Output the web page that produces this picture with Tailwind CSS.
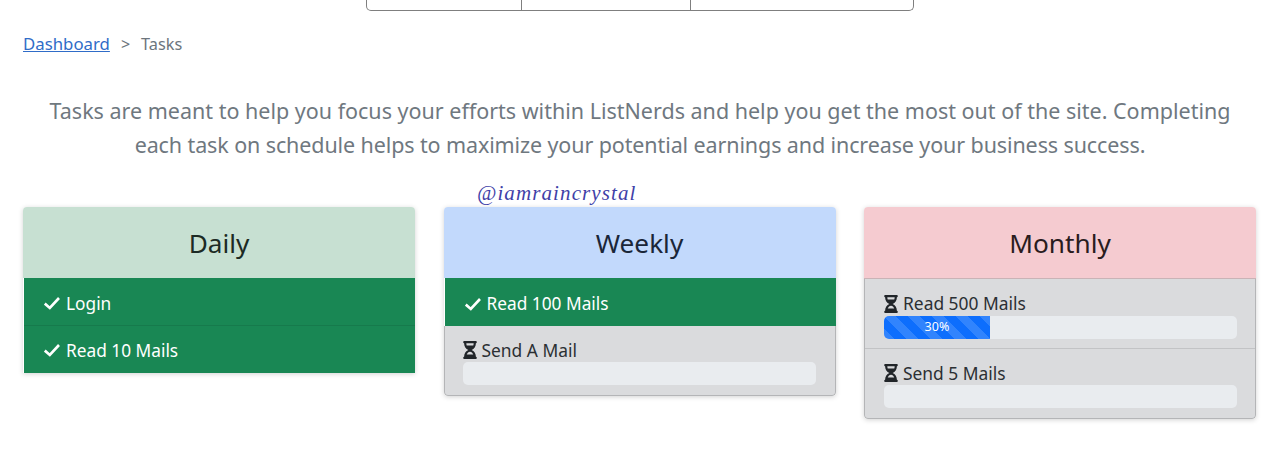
<!DOCTYPE html>
<html>
<head>
<meta charset="utf-8">
<script src="https://cdn.jsdelivr.net/npm/@tailwindcss/browser@4"></script>
</head>
<body class="bg-white font-['Noto_Sans',sans-serif] overflow-hidden h-[457px]">
<div class="flex justify-center">
  <div class="flex w-[548px] h-[11px] border border-t-0 border-[#7f7f7f] rounded-b-[5px]">
    <div class="w-[155px] border-r border-[#7f7f7f]"></div>
    <div class="w-[169px] border-r border-[#7f7f7f]"></div>
    <div class="flex-1"></div>
  </div>
</div>
<div class="px-[23px]">
  <nav class="mt-[21px] h-[24px] flex items-center text-[16.8px] leading-[24px]">
    <a class="text-[#2f6cc8] underline">Dashboard</a>
    <span class="ml-[11px] text-[#6c757d] text-[16px]">&gt;</span>
    <span class="ml-[11px] text-[#6c757d] text-[16.3px]">Tasks</span>
  </nav>
  <p class="mt-[38px] text-center text-[#6f787f] text-[21.5px] leading-[34px]">Tasks are meant to help you focus your efforts within ListNerds and help you get the most out of the site. Completing<br><span class="tracking-[-0.11px]">each task on schedule helps to maximize your potential earnings and increase your business success.</span></p>
  <div class="relative mt-[45px] grid grid-cols-[392px_392px_392px] gap-x-[28.5px] items-start">
    <span class="absolute left-[454px] top-[-26px] font-['Liberation_Serif',serif] italic text-[#3f3fa8] text-[21px] leading-[24px] tracking-[1.1px]">@iamraincrystal</span>

    <section class="rounded-t-[4px] overflow-hidden shadow-[0_1px_5px_rgba(0,0,0,0.18)]">
      <h2 class="h-[71px] pt-[3px] flex items-center justify-center bg-[#c7e0d2] text-[#1c2a24] text-[26.2px] font-normal">Daily</h2>
      <div class="ml-px h-[47px] px-[20px] pt-[4px] flex items-center gap-[6px] bg-[#198754] text-white text-[17.3px]">
        <svg class="w-[16px] h-[13px]" viewBox="0 0 16 13" fill="none" stroke="currentColor" stroke-width="2.6"><polyline points="0.8,6.6 5.8,11 15,1"/></svg>
        <span>Login</span>
      </div>
      <div class="ml-px h-[48px] px-[20px] pt-[2px] flex items-center gap-[6px] bg-[#198754] border-t border-[#167a4c] text-white text-[17.3px]">
        <svg class="w-[16px] h-[13px]" viewBox="0 0 16 13" fill="none" stroke="currentColor" stroke-width="2.6"><polyline points="0.8,6.6 5.8,11 15,1"/></svg>
        <span>Read 10 Mails</span>
      </div>
    </section>

    <section class="rounded-[4px] overflow-hidden shadow-[0_1px_5px_rgba(0,0,0,0.18)]">
      <h2 class="h-[71px] pt-[3px] flex items-center justify-center bg-[#c2d9fc] text-[#1a2638] text-[26.2px] font-normal">Weekly</h2>
      <div class="ml-px h-[48px] px-[20px] pt-[4px] flex items-center gap-[6px] bg-[#198754] text-white text-[17.3px]">
        <svg class="w-[16px] h-[13px]" viewBox="0 0 16 13" fill="none" stroke="currentColor" stroke-width="2.6"><polyline points="0.8,6.6 5.8,11 15,1"/></svg>
        <span>Read 100 Mails</span>
      </div>
      <div class="h-[70px] pl-[18px] pr-[19px] pt-[12px] bg-[#dadbdd] border border-t-0 border-[#b4b5b7] text-[#2b2f33] text-[17.4px] rounded-b-[4px]">
        <div class="flex items-center gap-[5px] h-[24px]">
          <svg class="w-[14px] h-[18px]" viewBox="0 0 384 512" fill="#212529"><path d="M360 0H24C10.745 0 0 10.745 0 24v16c0 13.255 10.745 24 24 24 0 90.965 51.016 167.734 120.842 192C75.016 280.266 24 357.035 24 448c-13.255 0-24 10.745-24 24v16c0 13.255 10.745 24 24 24h336c13.255 0 24-10.745 24-24v-16c0-13.255-10.745-24-24-24 0-90.965-51.016-167.734-120.842-192C308.984 231.734 360 154.965 360 64c13.255 0 24-10.745 24-24V24c0-13.255-10.745-24-24-24zm-75.078 384H99.08c17.059-46.797 52.096-80 92.92-80 40.821 0 75.862 33.196 92.922 80zm.019-256H99.078C91.988 108.548 88 86.748 88 64h208c0 22.805-3.987 44.587-11.059 64z"/></svg>
          <span>Send A Mail</span>
        </div>
        <div class="h-[23px] bg-[#e9ecef] rounded-[5px]"></div>
      </div>
    </section>

    <section class="rounded-[4px] overflow-hidden shadow-[0_1px_5px_rgba(0,0,0,0.18)]">
      <h2 class="h-[72px] pt-[3px] flex items-center justify-center bg-[#f5cbd0] text-[#2a1c1e] text-[26.2px] font-normal border-b border-[#c9b3b6]">Monthly</h2>
      <div class="border-x border-b border-[#b4b5b7] bg-[#dadbdd] text-[#2b2f33] text-[17.4px] rounded-b-[4px]">
        <div class="h-[70px] pl-[19px] pr-[18px] pt-[12px] border-b border-[#c2c3c5]">
          <div class="flex items-center gap-[5px] h-[25px]">
            <svg class="w-[14px] h-[18px]" viewBox="0 0 384 512" fill="#212529"><path d="M360 0H24C10.745 0 0 10.745 0 24v16c0 13.255 10.745 24 24 24 0 90.965 51.016 167.734 120.842 192C75.016 280.266 24 357.035 24 448c-13.255 0-24 10.745-24 24v16c0 13.255 10.745 24 24 24h336c13.255 0 24-10.745 24-24v-16c0-13.255-10.745-24-24-24 0-90.965-51.016-167.734-120.842-192C308.984 231.734 360 154.965 360 64c13.255 0 24-10.745 24-24V24c0-13.255-10.745-24-24-24zm-75.078 384H99.08c17.059-46.797 52.096-80 92.92-80 40.821 0 75.862 33.196 92.922 80zm.019-256H99.078C91.988 108.548 88 86.748 88 64h208c0 22.805-3.987 44.587-11.059 64z"/></svg>
            <span>Read 500 Mails</span>
          </div>
          <div class="h-[23px] bg-[#e9ecef] rounded-[5px] overflow-hidden">
            <div class="w-[30%] h-full flex items-center justify-center text-white text-[12.5px] bg-[#0d6efd] bg-[linear-gradient(45deg,rgba(255,255,255,0.15)_25%,transparent_25%,transparent_50%,rgba(255,255,255,0.15)_50%,rgba(255,255,255,0.15)_75%,transparent_75%,transparent)] bg-[length:24px_24px]">30%</div>
          </div>
        </div>
        <div class="h-[69px] pl-[19px] pr-[18px] pt-[12px]">
          <div class="flex items-center gap-[5px] h-[24px]">
            <svg class="w-[14px] h-[18px]" viewBox="0 0 384 512" fill="#212529"><path d="M360 0H24C10.745 0 0 10.745 0 24v16c0 13.255 10.745 24 24 24 0 90.965 51.016 167.734 120.842 192C75.016 280.266 24 357.035 24 448c-13.255 0-24 10.745-24 24v16c0 13.255 10.745 24 24 24h336c13.255 0 24-10.745 24-24v-16c0-13.255-10.745-24-24-24 0-90.965-51.016-167.734-120.842-192C308.984 231.734 360 154.965 360 64c13.255 0 24-10.745 24-24V24c0-13.255-10.745-24-24-24zm-75.078 384H99.08c17.059-46.797 52.096-80 92.92-80 40.821 0 75.862 33.196 92.922 80zm.019-256H99.078C91.988 108.548 88 86.748 88 64h208c0 22.805-3.987 44.587-11.059 64z"/></svg>
            <span>Send 5 Mails</span>
          </div>
          <div class="h-[23px] bg-[#e9ecef] rounded-[5px]"></div>
        </div>
      </div>
    </section>
  </div>
</div>
</body>
</html>
